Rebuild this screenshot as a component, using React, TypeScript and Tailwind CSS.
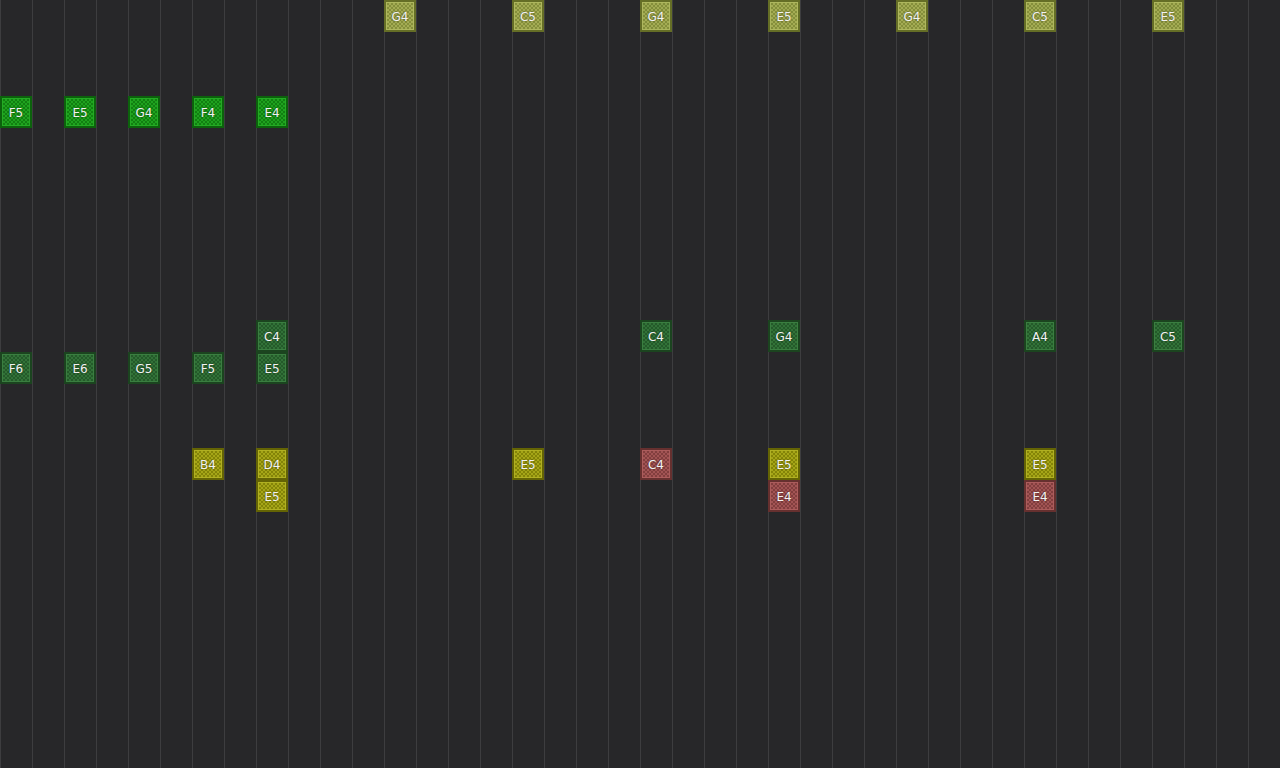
type Kind = 'bright' | 'dark' | 'yellow' | 'red' | 'olive'

const kindStyles: Record<Kind, { outer: string; inner: string }> = {
  bright: {
    outer: 'border-[#0c620c] bg-[#0c620c]',
    inner:
      'border-[#24aa24] bg-[repeating-conic-gradient(#1fa21f_0%_25%,#118011_0%_50%)]',
  },
  dark: {
    outer: 'border-[#1b441f] bg-[#1b441f]',
    inner:
      'border-[#3a7e40] bg-[repeating-conic-gradient(#327238_0%_25%,#245a2a_0%_50%)]',
  },
  yellow: {
    outer: 'border-[#646404] bg-[#646404]',
    inner:
      'border-[#b0b022] bg-[repeating-conic-gradient(#a6a618_0%_25%,#848408_0%_50%)]',
  },
  red: {
    outer: 'border-[#66302f] bg-[#66302f]',
    inner:
      'border-[#ac5c5c] bg-[repeating-conic-gradient(#a25454_0%_25%,#823e3e_0%_50%)]',
  },
  olive: {
    outer: 'border-[#656e26] bg-[#656e26]',
    inner:
      'border-[#aeb75e] bg-[repeating-conic-gradient(#a4ac54_0%_25%,#858f3b_0%_50%)]',
  },
}

type Note = { label: string; kind: Kind; pos: string }

const notes: Note[] = [
  // top row
  { label: 'G4', kind: 'olive', pos: 'col-start-13 row-start-1' },
  { label: 'C5', kind: 'olive', pos: 'col-start-17 row-start-1' },
  { label: 'G4', kind: 'olive', pos: 'col-start-21 row-start-1' },
  { label: 'E5', kind: 'olive', pos: 'col-start-25 row-start-1' },
  { label: 'G4', kind: 'olive', pos: 'col-start-29 row-start-1' },
  { label: 'C5', kind: 'olive', pos: 'col-start-33 row-start-1' },
  { label: 'E5', kind: 'olive', pos: 'col-start-37 row-start-1' },
  // bright greens
  { label: 'F5', kind: 'bright', pos: 'col-start-1 row-start-4' },
  { label: 'E5', kind: 'bright', pos: 'col-start-3 row-start-4' },
  { label: 'G4', kind: 'bright', pos: 'col-start-5 row-start-4' },
  { label: 'F4', kind: 'bright', pos: 'col-start-7 row-start-4' },
  { label: 'E4', kind: 'bright', pos: 'col-start-9 row-start-4' },
  // dark greens
  { label: 'C4', kind: 'dark', pos: 'col-start-9 row-start-11' },
  { label: 'C4', kind: 'dark', pos: 'col-start-21 row-start-11' },
  { label: 'G4', kind: 'dark', pos: 'col-start-25 row-start-11' },
  { label: 'A4', kind: 'dark', pos: 'col-start-33 row-start-11' },
  { label: 'C5', kind: 'dark', pos: 'col-start-37 row-start-11' },
  { label: 'F6', kind: 'dark', pos: 'col-start-1 row-start-12' },
  { label: 'E6', kind: 'dark', pos: 'col-start-3 row-start-12' },
  { label: 'G5', kind: 'dark', pos: 'col-start-5 row-start-12' },
  { label: 'F5', kind: 'dark', pos: 'col-start-7 row-start-12' },
  { label: 'E5', kind: 'dark', pos: 'col-start-9 row-start-12' },
  // yellow / red
  { label: 'B4', kind: 'yellow', pos: 'col-start-7 row-start-15' },
  { label: 'D4', kind: 'yellow', pos: 'col-start-9 row-start-15' },
  { label: 'E5', kind: 'yellow', pos: 'col-start-17 row-start-15' },
  { label: 'C4', kind: 'red', pos: 'col-start-21 row-start-15' },
  { label: 'E5', kind: 'yellow', pos: 'col-start-25 row-start-15' },
  { label: 'E5', kind: 'yellow', pos: 'col-start-33 row-start-15' },
  { label: 'E5', kind: 'yellow', pos: 'col-start-9 row-start-16' },
  { label: 'E4', kind: 'red', pos: 'col-start-25 row-start-16' },
  { label: 'E4', kind: 'red', pos: 'col-start-33 row-start-16' },
]

function NoteBox({ label, kind, pos }: Note) {
  const s = kindStyles[kind]
  return (
    <div className={`${pos} flex h-8 w-8 border-2 ${s.outer}`}>
      <div
        className={`flex flex-1 items-center justify-center border bg-size-[4px_4px] pt-[2px] ${s.inner}`}
      >
        <span className="font-['DejaVu_Sans',sans-serif] text-[12px] font-medium leading-none text-[#f2f2f2] [text-shadow:0_0_2px_rgba(0,0,0,0.55)]">
          {label}
        </span>
      </div>
    </div>
  )
}

export default function App() {
  return (
    <div className="h-[768px] w-[1280px] overflow-hidden bg-[#272729]">
      <div className="grid h-full w-full grid-cols-[repeat(40,32px)] grid-rows-[repeat(24,32px)] bg-[linear-gradient(to_right,#3d3d3f_1px,transparent_1px)] bg-size-[32px_100%]">
        {notes.map((n, i) => (
          <NoteBox key={i} {...n} />
        ))}
      </div>
    </div>
  )
}
